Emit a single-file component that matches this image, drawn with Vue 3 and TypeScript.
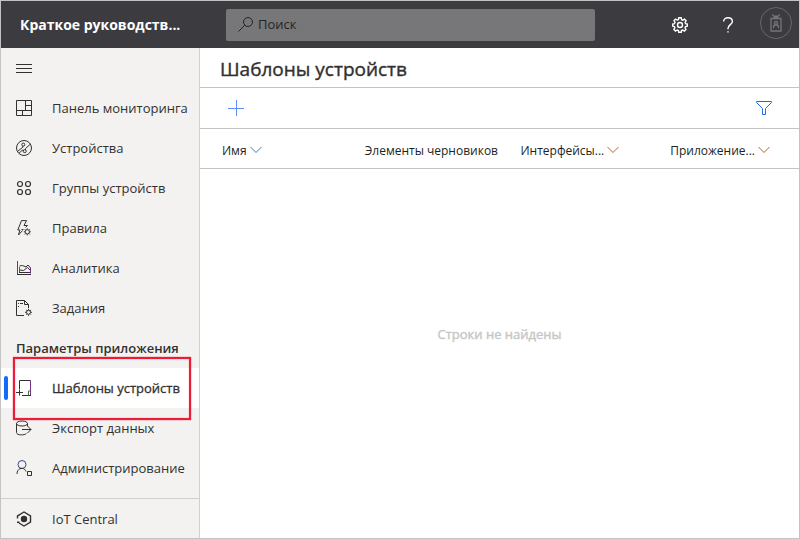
<script setup lang="ts">
import { ref } from 'vue'

interface NavItem {
  id: string
  label: string
}

const mainItems: NavItem[] = [
  { id: 'dashboard', label: 'Панель мониторинга' },
  { id: 'devices', label: 'Устройства' },
  { id: 'groups', label: 'Группы устройств' },
  { id: 'rules', label: 'Правила' },
  { id: 'analytics', label: 'Аналитика' },
  { id: 'jobs', label: 'Задания' },
]

const settingsItems: NavItem[] = [
  { id: 'templates', label: 'Шаблоны устройств' },
  { id: 'export', label: 'Экспорт данных' },
  { id: 'admin', label: 'Администрирование' },
]

const sections = [
  { title: '', items: mainItems },
  { title: 'Параметры приложения', items: settingsItems },
]

const columns = [
  { label: 'Имя', sort: 'cool' },
  { label: 'Элементы черновиков', sort: '' },
  { label: 'Интерфейсы...', sort: 'warm' },
  { label: 'Приложение...', sort: 'warm' },
]

const active = ref('templates')
const query = ref('')
</script>

<template>
  <div class="app">
    <header class="topbar">
      <div class="brand">Краткое руководств...</div>
      <label class="search">
        <svg class="icon" viewBox="0 0 16 16" aria-hidden="true">
          <circle cx="10" cy="5" r="4.5" />
          <path d="M6.8 8.2 .5 14.500" />
        </svg>
        <input v-model="query" type="text" placeholder="Поиск" aria-label="Поиск" />
      </label>
      <div class="actions">
        <button type="button" class="action" aria-label="Параметры">
          <svg class="icon bold" viewBox="0 0 16 16">
            <path d="M6.8.8h2.4l.4 1.9 1.2.5 1.7-1 1.6 1.6-1 1.7.5 1.2 1.7.3v2.2l-1.8.4-.5 1.2 1 1.7-1.6 1.6-1.7-1-1.2.5-.3 1.7H6.8l-.4-1.8-1.2-.5-1.7 1-1.6-1.6 1-1.7-.5-1.2-1.7-.3V7l1.8-.4.5-1.2-1-1.7 1.6-1.6 1.7 1 1.1-.4z" />
            <circle cx="8" cy="8" r="2.5" />
          </svg>
        </button>
        <button type="button" class="action" aria-label="Справка">
          <svg class="icon bold" viewBox="0 0 16 16">
            <path d="M3.600 4.600C3.600 2 5.600.7 8 .7s4.400 1.500 4.400 3.800C12.400 7.600 8 7.800 8 11.500v.8M8 14.200v1.400" />
          </svg>
        </button>
        <button type="button" class="avatar" aria-label="Учётная запись">
          <svg class="badge" viewBox="0 0 12 18">
            <path d="M1 4.500h10v12.500H1zM2.500 .5l3 4M9.500 .5l-3 4M5 1.500 6 3l1-1.500" />
            <circle cx="6" cy="9" r="1.500" />
            <path d="M3.500 14v-1c0-3 5-3 5 0v1" />
          </svg>
        </button>
      </div>
    </header>

    <div class="body">
      <nav class="sidebar">
        <button type="button" class="row menu" aria-label="Меню">
          <svg class="icon" viewBox="0 0 16 16"><path d="M0 4.500h16M0 8.500h16M0 12.500h16" /></svg>
        </button>

        <template v-for="section in sections" :key="section.title">
          <h2 v-if="section.title" class="section-title">{{ section.title }}</h2>
          <a
            v-for="item in section.items"
            :key="item.id"
            href="#"
            class="row"
            :class="{ active: item.id === active }"
            @click.prevent="active = item.id"
          >
            <svg class="icon" viewBox="0 0 16 16" aria-hidden="true">
              <g v-if="item.id === 'dashboard'">
                <path d="M.5.500h15v15H.5zM.5 10.500h15M9.500.500v10M9.500 5.500h6M6.500 10.500v5" />
              </g>
              <g v-else-if="item.id === 'devices'">
                <circle cx="8" cy="8" r="7.500" />
                <circle cx="7.300" cy="4.600" r="1.500" />
                <circle cx="8.700" cy="11.200" r="1.500" />
                <path d="M6.800 6v1.200L1.500 11.500M3 13.200l3.300-3 1.400.2M9.500 9.900V8.600l5-4.600" />
              </g>
              <g v-else-if="item.id === 'groups'" class="medium">
                <circle cx="4" cy="4" r="2.500" /><circle cx="12" cy="4" r="2.500" />
                <circle cx="4" cy="12" r="2.500" /><circle cx="12" cy="12" r="2.500" />
              </g>
              <g v-else-if="item.id === 'rules'">
                <path d="M6.500 10.500 2.500 15l1.400-5H1.800L5.500.6h5L8 5.500h3.500L9.500 7.500M5.500 9.500h2" />
                <circle cx="11.300" cy="11.800" r="2.200" />
                <path d="M11.300 8.300v1.300M11.300 14v1.300M7.800 11.800h1.300M13.500 11.800h1.300M8.800 9.300l1 1M12.900 13.400l1 1M13.800 9.300l-1 1M9.700 13.400l-1 1" />
              </g>
              <g v-else-if="item.id === 'analytics'">
                <path class="purple" d="M1.500 1v13.500" />
                <path class="green" d="M3.500 12.500V7" />
                <path d="M1 14.500h14M3 12.500h12M3.500 6l3-.5 3.500 1.500 2-2 2.500 3M3.500 10l4 .5 4-3 3 3" />
                <path class="purple" d="M14.500 7.500v6" />
              </g>
              <g v-else-if="item.id === 'jobs'">
                <path d="M8 15.500H.5V.500h8l4 4V8M8.500.500v4h4M2 3.500h1M4 3.500h3M2 6.500h1" />
                <circle cx="12.500" cy="12.300" r="2" />
                <path d="M12.500 8.800v1.300M12.500 14.500v1.300M9 12.300h1.300M14.700 12.300H16M10.200 10l.8.8M14 13.800l.8.8M14.900 10l-.9.800M11 13.800l-.8.800" />
              </g>
              <g v-else-if="item.id === 'templates'">
                <path d="M3.500 9V.500h11M6 15.500h9M0 12.500h7M3.500 9.500v6" />
                <path class="purple" d="M14.500.500v15" />
                <path class="green" d="M12.500 15.500v-4.500h1.500" />
              </g>
              <g v-else-if="item.id === 'export'">
                <ellipse cx="6" cy="3.500" rx="5.500" ry="2.500" />
                <path d="M.5 3.500v9c0 3 8 3 10 1M11.500 3.500V6M6 9.500h9M11.500 6l3.500 3.500-3.500 3.500" />
              </g>
              <g v-else>
                <circle class="blue" cx="6" cy="4.500" r="4" />
                <path d="M1 14c0-7 8-7 9-2.500M11.500 11.500h4v4h-4z" />
              </g>
            </svg>
            <span>{{ item.label }}</span>
          </a>
        </template>

        <a href="#" class="row footer-link">
          <svg class="icon bold" viewBox="0 0 16 16" aria-hidden="true">
            <path d="M1.500 7.500V4.800L8 1l6.500 3.800v6.400L8 15l-5-3M1 11.200h2.500M1.500 4.800l2-.6" />
            <circle class="solid" cx="8" cy="8" r="2.500" />
          </svg>
          <span>IoT Central</span>
        </a>
      </nav>

      <main class="content">
        <h1 class="title">Шаблоны устройств</h1>
        <div class="toolbar">
          <button type="button" class="tool" aria-label="Создать">
            <svg class="icon" viewBox="0 0 16 16"><path d="M8.500 0v16M0 8.500h16" /></svg>
          </button>
          <button type="button" class="tool" aria-label="Фильтр">
            <svg class="icon" viewBox="0 0 16 16"><path d="M.5 1.500h15v1L9.500 8.500v6h-3v-6L.5 2.500z" /></svg>
          </button>
        </div>
        <table class="grid">
          <thead>
            <tr>
              <th v-for="column in columns" :key="column.label" scope="col">
                <span class="head">
                  {{ column.label }}
                  <svg v-if="column.sort" class="chevron" :class="column.sort" viewBox="0 0 12 8" aria-hidden="true">
                    <path d="M.5 1 6 6.500 11.500 1" />
                  </svg>
                </span>
              </th>
            </tr>
          </thead>
        </table>
        <p class="empty">Строки не найдены</p>
      </main>
    </div>
  </div>
</template>

<style>
body {
  margin: 0;
}
</style>

<style scoped>
.app {
  box-sizing: border-box;
  display: flex;
  flex-direction: column;
  min-height: 100vh;
  border: 1px solid #c3c3c3;
  background: #fff;
  color: #323130;
  font-family: "Open Sans", "Noto Sans", sans-serif;
  font-size: 13px;
}

button {
  border: 0;
  padding: 0;
  background: none;
  color: inherit;
  font: inherit;
}

.icon {
  flex: none;
  width: 16px;
  height: 16px;
  fill: none;
  stroke: currentColor;
  stroke-width: 1;
}

.medium {
  stroke-width: 1.2;
}

.bold {
  stroke-width: 1.4;
}

.topbar {
  display: flex;
  align-items: center;
  height: 47px;
  background: #3c3b40;
  color: #fff;
}

.brand {
  box-sizing: border-box;
  flex: none;
  width: 225px;
  padding-left: 19px;
  font-size: 14px;
  font-weight: 700;
}

.search {
  box-sizing: border-box;
  display: flex;
  flex: 0 1 369px;
  align-items: center;
  gap: 4px;
  height: 32px;
  padding: 0 12px;
  border-radius: 2px;
  background: #777679;
  color: #252423;
}

.search input {
  flex: 1;
  min-width: 0;
  border: 0;
  padding: 0 0 2px;
  outline: 0;
  background: none;
  color: inherit;
  font: inherit;
}

.search input::placeholder {
  color: #252423;
  opacity: 1;
}

.actions {
  display: flex;
  align-items: center;
  margin-left: auto;
  padding-right: 7px;
}

.action {
  display: flex;
  align-items: center;
  justify-content: center;
  width: 48px;
  height: 47px;
}

.avatar {
  box-sizing: border-box;
  display: flex;
  align-items: center;
  justify-content: center;
  width: 32px;
  height: 32px;
  margin: 0 0 4px 8px;
  border: 1px solid #68676b;
  border-radius: 50%;
  color: #747377;
}

.badge {
  width: 12px;
  height: 18px;
  fill: none;
  stroke: currentColor;
  stroke-width: 1.3;
}

.body {
  display: flex;
  flex: 1;
}

.sidebar {
  box-sizing: border-box;
  display: flex;
  flex: none;
  flex-direction: column;
  width: 199px;
  border-right: 1px solid #d2d0ce;
  background: #f3f2f1;
}

.row {
  position: relative;
  box-sizing: border-box;
  display: flex;
  align-items: center;
  gap: 20px;
  height: 40px;
  padding-left: 15px;
  color: #323130;
  text-decoration: none;
  white-space: nowrap;
}

.section-title {
  margin: 0;
  padding-left: 15px;
  font-size: 13px;
  font-weight: 600;
  line-height: 40px;
  white-space: nowrap;
}

.active {
  background: #fff;
}

.active span {
  -webkit-text-stroke: 0.3px currentColor;
}

.active::before {
  content: "";
  position: absolute;
  top: 8px;
  left: 3px;
  width: 4px;
  height: 24px;
  border-radius: 2px;
  background: #136bfb;
}

.active::after {
  content: "";
  position: absolute;
  z-index: 1;
  top: -11px;
  right: 8px;
  bottom: -12px;
  left: 12px;
  border: 2px solid #ec1c38;
  box-shadow: inset 0 0 1px #ec1c38, 0 0 1px #ec1c38;
}

.footer-link {
  margin-top: auto;
  border-top: 1px solid #d2d0ce;
}

.purple {
  stroke: #75308c;
}

.green {
  stroke: #38842b;
}

.blue {
  stroke: #344c84;
}

.solid {
  fill: currentColor;
}

.content {
  display: flex;
  flex: 1;
  flex-direction: column;
  min-width: 0;
}

.title {
  margin: 0;
  padding: 3px 20px 0;
  border-bottom: 1px solid #c3c3c3;
  font-size: 19px;
  font-weight: 400;
  line-height: 36px;
  -webkit-text-stroke: 0.4px currentColor;
}

.toolbar {
  display: flex;
  align-items: center;
  justify-content: space-between;
  height: 40px;
  padding: 0 27px 0 28px;
  border-bottom: 1px solid #c3c3c3;
  color: #1b68f5;
}

.toolbar .tool:first-child {
  color: #5c8cff;
}

.tool {
  display: flex;
}

.grid {
  width: 100%;
  border-collapse: collapse;
  table-layout: fixed;
  border-bottom: 1px solid #c3c3c3;
  color: #201f1e;
  font-size: 12px;
}

.grid th {
  height: 36px;
  padding: 3px 0 0;
  font-weight: 400;
  text-align: left;
  white-space: nowrap;
}

.grid th:first-child {
  box-sizing: border-box;
  width: 27.5%;
  padding-left: 22px;
}

.grid th:nth-child(2) {
  width: 26%;
}

.grid th:nth-child(3) {
  width: 25%;
}

.head {
  display: flex;
  align-items: center;
  gap: 3px;
}

.chevron {
  width: 12px;
  height: 8px;
  fill: none;
  stroke-width: 1;
}

.cool {
  stroke: #3a78a0;
}

.warm {
  stroke: #b8622c;
}

.empty {
  display: flex;
  flex: 1;
  align-items: center;
  justify-content: center;
  margin: 0;
  padding-bottom: 40px;
  color: #c8c6c4;
  font-weight: 400;
  -webkit-text-stroke: 0.4px currentColor;
}
</style>
